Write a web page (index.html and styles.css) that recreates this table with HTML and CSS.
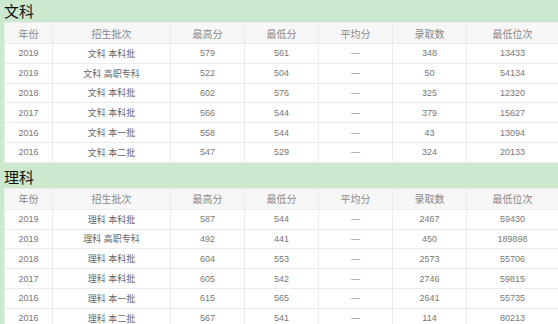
FILE: index.html
```html
<!DOCTYPE html>
<html>
<head>
<meta charset="utf-8">
<title>录取分数</title>
<link rel="stylesheet" href="styles.css">
</head>
<body>
  <div class="page">
    <h3 class="title">文科</h3>
    <table class="score">
      <colgroup>
        <col class="c-year"><col class="c-batch"><col class="c-num"><col class="c-num"><col class="c-num"><col class="c-num"><col class="c-rank">
      </colgroup>
      <tr><th>年份</th><th>招生批次</th><th>最高分</th><th>最低分</th><th>平均分</th><th>录取数</th><th>最低位次</th></tr>
      <tr><td>2019</td><td class="batch">文科 本科批</td><td>579</td><td>561</td><td>—</td><td>348</td><td>13433</td></tr>
      <tr><td>2019</td><td class="batch">文科 高职专科</td><td>522</td><td>504</td><td>—</td><td>50</td><td>54134</td></tr>
      <tr><td>2018</td><td class="batch">文科 本科批</td><td>602</td><td>576</td><td>—</td><td>325</td><td>12320</td></tr>
      <tr><td>2017</td><td class="batch">文科 本科批</td><td>566</td><td>544</td><td>—</td><td>379</td><td>15627</td></tr>
      <tr><td>2016</td><td class="batch">文科 本一批</td><td>558</td><td>544</td><td>—</td><td>43</td><td>13094</td></tr>
      <tr><td>2016</td><td class="batch">文科 本二批</td><td>547</td><td>529</td><td>—</td><td>324</td><td>20133</td></tr>
    </table>

    <h3 class="title">理科</h3>
    <table class="score">
      <colgroup>
        <col class="c-year"><col class="c-batch"><col class="c-num"><col class="c-num"><col class="c-num"><col class="c-num"><col class="c-rank">
      </colgroup>
      <tr><th>年份</th><th>招生批次</th><th>最高分</th><th>最低分</th><th>平均分</th><th>录取数</th><th>最低位次</th></tr>
      <tr><td>2019</td><td class="batch">理科 本科批</td><td>587</td><td>544</td><td>—</td><td>2467</td><td>59430</td></tr>
      <tr><td>2019</td><td class="batch">理科 高职专科</td><td>492</td><td>441</td><td>—</td><td>450</td><td>189898</td></tr>
      <tr><td>2018</td><td class="batch">理科 本科批</td><td>604</td><td>553</td><td>—</td><td>2573</td><td>55706</td></tr>
      <tr><td>2017</td><td class="batch">理科 本科批</td><td>605</td><td>542</td><td>—</td><td>2746</td><td>59815</td></tr>
      <tr><td>2016</td><td class="batch">理科 本一批</td><td>615</td><td>565</td><td>—</td><td>2641</td><td>55735</td></tr>
      <tr><td>2016</td><td class="batch">理科 本二批</td><td>567</td><td>541</td><td>—</td><td>114</td><td>80213</td></tr>
    </table>
  </div>
</body>
</html>
```

FILE: styles.css
```css
html, body {
  margin: 0;
  background: #cce8cf;
}
body {
  font-family: "Liberation Sans", "Noto Sans CJK SC", sans-serif;
  color: #666;
}
.page {
  padding-left: 4px;
}
.title {
  margin: 0;
  font-size: 15px;
  line-height: 22px;
  font-weight: normal;
  color: #111;
  font-family: "Noto Sans CJK SC", sans-serif;
}
.score {
  width: 554px;
  border-collapse: collapse;
  table-layout: fixed;
  background: #fff;
  margin-bottom: 3px;
}
.c-year { width: 48px; }
.c-batch { width: 118px; }
.c-num { width: 74px; }
.c-rank { width: 92px; }
th, td {
  border: 1px solid #ececec;
  text-align: center;
  padding: 0;
  white-space: nowrap;
}
th {
  height: 20px;
  background: #f7f7f7;
  font-size: 10px;
  font-weight: normal;
  color: #888;
}
td {
  height: 18.8px;
  font-size: 9px;
  color: #777;
}
td.batch {
  color: #666;
}
```
